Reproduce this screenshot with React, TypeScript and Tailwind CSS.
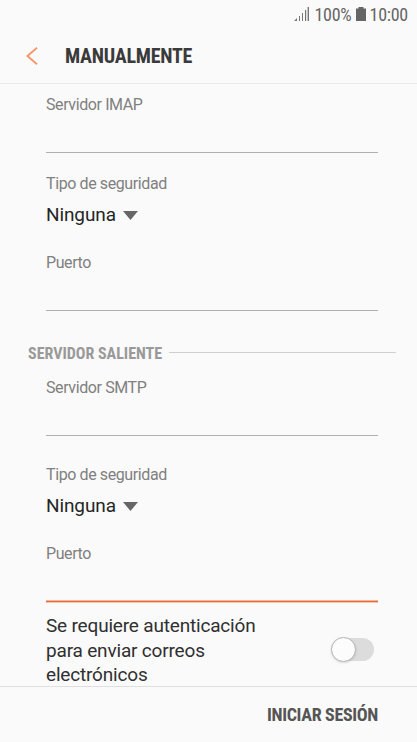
function Field({ label, active = false }: { label: string; active?: boolean }) {
  return (
    <label className="block h-[61px]">
      <span className="block h-6 pt-px text-[16px] leading-6 tracking-[-0.4px] text-[#808080]">{label}</span>
      <input
        className={`block h-[37px] w-full border-b bg-transparent text-lg outline-none ${
          active ? "border-[#e06a3e] shadow-[0_1px_0_#fcc6ab,inset_0_-1px_0_#fcb595]" : "border-[#b0b0b0]"
        }`}
      />
    </label>
  );
}

function SecuritySelect() {
  return (
    <div className="h-[56px]">
      <div className="h-6 pt-px text-[16px] leading-6 tracking-[-0.4px] text-[#808080]">Tipo de seguridad</div>
      <button className="mt-2 flex h-6 items-center gap-[7px] text-[19px] leading-6 tracking-[-0.1px] text-[#252525]">
        Ninguna
        <svg width="15" height="9" viewBox="0 0 15 9" fill="#666">
          <path d="M0 0h15L7.5 9z" />
        </svg>
      </button>
    </div>
  );
}

function StatusBar() {
  return (
    <div className="flex h-[28px] items-center justify-end pr-[10px] text-[18px] tracking-[-0.25px] text-[#666] [font-family:'Roboto_Condensed',Roboto,sans-serif] [font-stretch:75%]">
      <svg width="15" height="14" viewBox="0 0 15 14" fill="#777" className="mr-[5px]">
        <path d="M0 14l3-3v3zM5 9h1v5H5zM8 6h1v8H8zM11 3h1.2v11H11zM13.6 0H15v14h-1.4z" />
      </svg>
      <span className="pt-px">100%</span>
      <svg width="10" height="14" viewBox="0 0 10 14" fill="#666" className="mr-[4px] ml-[4px]">
        <path d="M2.5 0h5v1.5H10V14H0V1.5h2.5z" />
      </svg>
      <span className="-mr-px pt-px">10:00</span>
    </div>
  );
}

export default function App() {
  return (
    <div className="flex h-[742px] w-[417px] flex-col overflow-hidden bg-[#fafafa] [font-family:Roboto,sans-serif]">
      <StatusBar />
      <header className="flex h-14 shrink-0 items-center border-b border-[#ebebeb] pl-[26px]">
        <button aria-label="Atrás">
          <svg width="12" height="18" viewBox="0 0 12 18" fill="none" stroke="#f79468" strokeWidth="1.8">
            <path d="M11 0.7L1.4 9l9.6 8.3" />
          </svg>
        </button>
        <h1 className="ml-[27px] text-[20px] font-bold tracking-[-0.25px] text-[#3a3a3a] [font-family:'Roboto_Condensed',Roboto,sans-serif] [font-stretch:75%]">
          MANUALMENTE
        </h1>
      </header>

      <main className="h-[602px] shrink-0 overflow-hidden pt-2">
        <div className="pr-[39px] pl-[46px]">
          <Field label="Servidor IMAP" />
          <div className="mt-[18px]">
            <SecuritySelect />
          </div>
          <div className="mt-[23px]">
            <Field label="Puerto" />
          </div>
        </div>

        <div className="mt-[30px] flex h-6 items-start gap-[7px] pr-[21px] pl-7">
          <h2 className="pt-px text-[16px] leading-6 font-bold text-[#999] [font-family:'Roboto_Condensed',Roboto,sans-serif] [font-stretch:75%]">
            SERVIDOR SALIENTE
          </h2>
          <div className="mt-[11px] h-px flex-1 bg-[#cfcfcf]" />
        </div>

        <div className="mt-[10px] pr-[39px] pl-[46px]">
          <Field label="Servidor SMTP" />
          <div className="mt-[26px]">
            <SecuritySelect />
          </div>
          <div className="mt-[23px]">
            <Field label="Puerto" active />
          </div>
          <div className="mt-3 flex items-start justify-between">
            <p className="w-[230px] text-[19px] leading-[24.5px] tracking-[-0.18px] text-[#303030]">
              Se requiere autenticación para enviar correos electrónicos
            </p>
            <button
              role="switch"
              aria-checked="false"
              aria-label="Autenticación"
              className="mt-[24px] mr-1 flex h-[23px] w-[42px] items-center rounded-full bg-[#dcdcdc]"
            >
              <span className="-ml-px size-[25px] shrink-0 rounded-full border border-[#b5b5b5] bg-[#fcfcfc] shadow-sm" />
            </button>
          </div>
        </div>
      </main>

      <footer className="flex flex-1 items-center justify-end border-t border-[#dfdfdf] pr-[39px]">
        <button className="text-[18px] font-bold tracking-[-0.35px] text-[#555] [font-family:'Roboto_Condensed',Roboto,sans-serif] [font-stretch:75%]">
          INICIAR SESIÓN
        </button>
      </footer>
    </div>
  );
}
